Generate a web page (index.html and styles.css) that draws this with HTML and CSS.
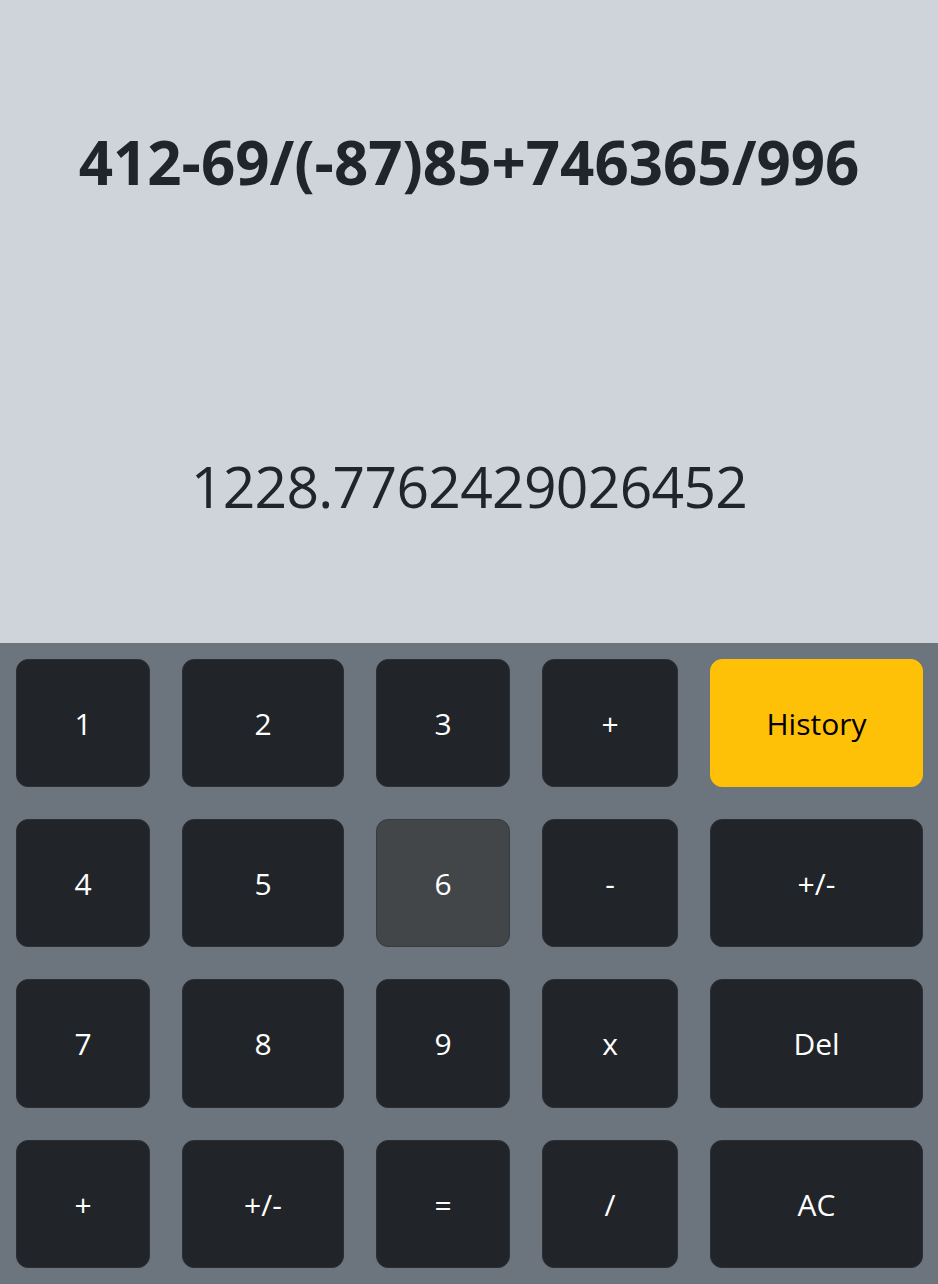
FILE: index.html
```html
<!DOCTYPE html>
<html lang="en">
<head>
<meta charset="utf-8">
<title>Calculator</title>
<link rel="stylesheet" href="styles.css">
</head>
<body>
<div class="calc">
  <div class="display">
    <div class="expr">412-69/(-87)85+746365/996</div>
    <div class="result">1228.7762429026452</div>
  </div>
  <div class="keypad">
    <button class="key">1</button>
    <button class="key">2</button>
    <button class="key">3</button>
    <button class="key">+</button>
    <button class="key warn">History</button>
    <button class="key">4</button>
    <button class="key">5</button>
    <button class="key active">6</button>
    <button class="key">-</button>
    <button class="key">+/-</button>
    <button class="key">7</button>
    <button class="key">8</button>
    <button class="key">9</button>
    <button class="key">x</button>
    <button class="key">Del</button>
    <button class="key">+</button>
    <button class="key">+/-</button>
    <button class="key">=</button>
    <button class="key">/</button>
    <button class="key">AC</button>
  </div>
</div>
</body>
</html>
```
FILE: styles.css
```css
html, body {
  margin: 0;
  padding: 0;
}
body {
  font-family: "Open Sans", "Noto Sans", sans-serif;
  color: #212529;
  background: #6c757d;
}
.calc {
  width: 938px;
  height: 1284px;
  display: flex;
  flex-direction: column;
}
.display {
  height: 643px;
  background: #cfd4da;
  display: flex;
  flex-direction: column;
  align-items: center;
}
.expr {
  margin-top: 122px;
  font-size: 60px;
  font-weight: 700;
  line-height: 80px;
  white-space: nowrap;
}
.result {
  margin-top: 244px;
  font-size: 57px;
  font-weight: 400;
  line-height: 80px;
  letter-spacing: -0.7px;
  white-space: nowrap;
}
.keypad {
  flex: 1;
  background: #6c757d;
  display: grid;
  grid-template-columns: 134px 162px 134px 136px 213px;
  grid-template-rows: 128px 128px 129px 128px;
  column-gap: 32px;
  row-gap: 32px;
  padding: 16px 15px 16px 16px;
  align-content: start;
}
.key {
  font-family: "Open Sans", "Noto Sans", sans-serif;
  font-size: 30px;
  color: #fff;
  background: #212529;
  border: 1px solid #2b2f33;
  border-radius: 12px;
  padding: 0;
  margin: 0;
}
.key.active {
  background: #424649;
  border-color: #373b3e;
}
.key.warn {
  background: #ffc107;
  border-color: #ffc107;
  color: #000;
}
```
